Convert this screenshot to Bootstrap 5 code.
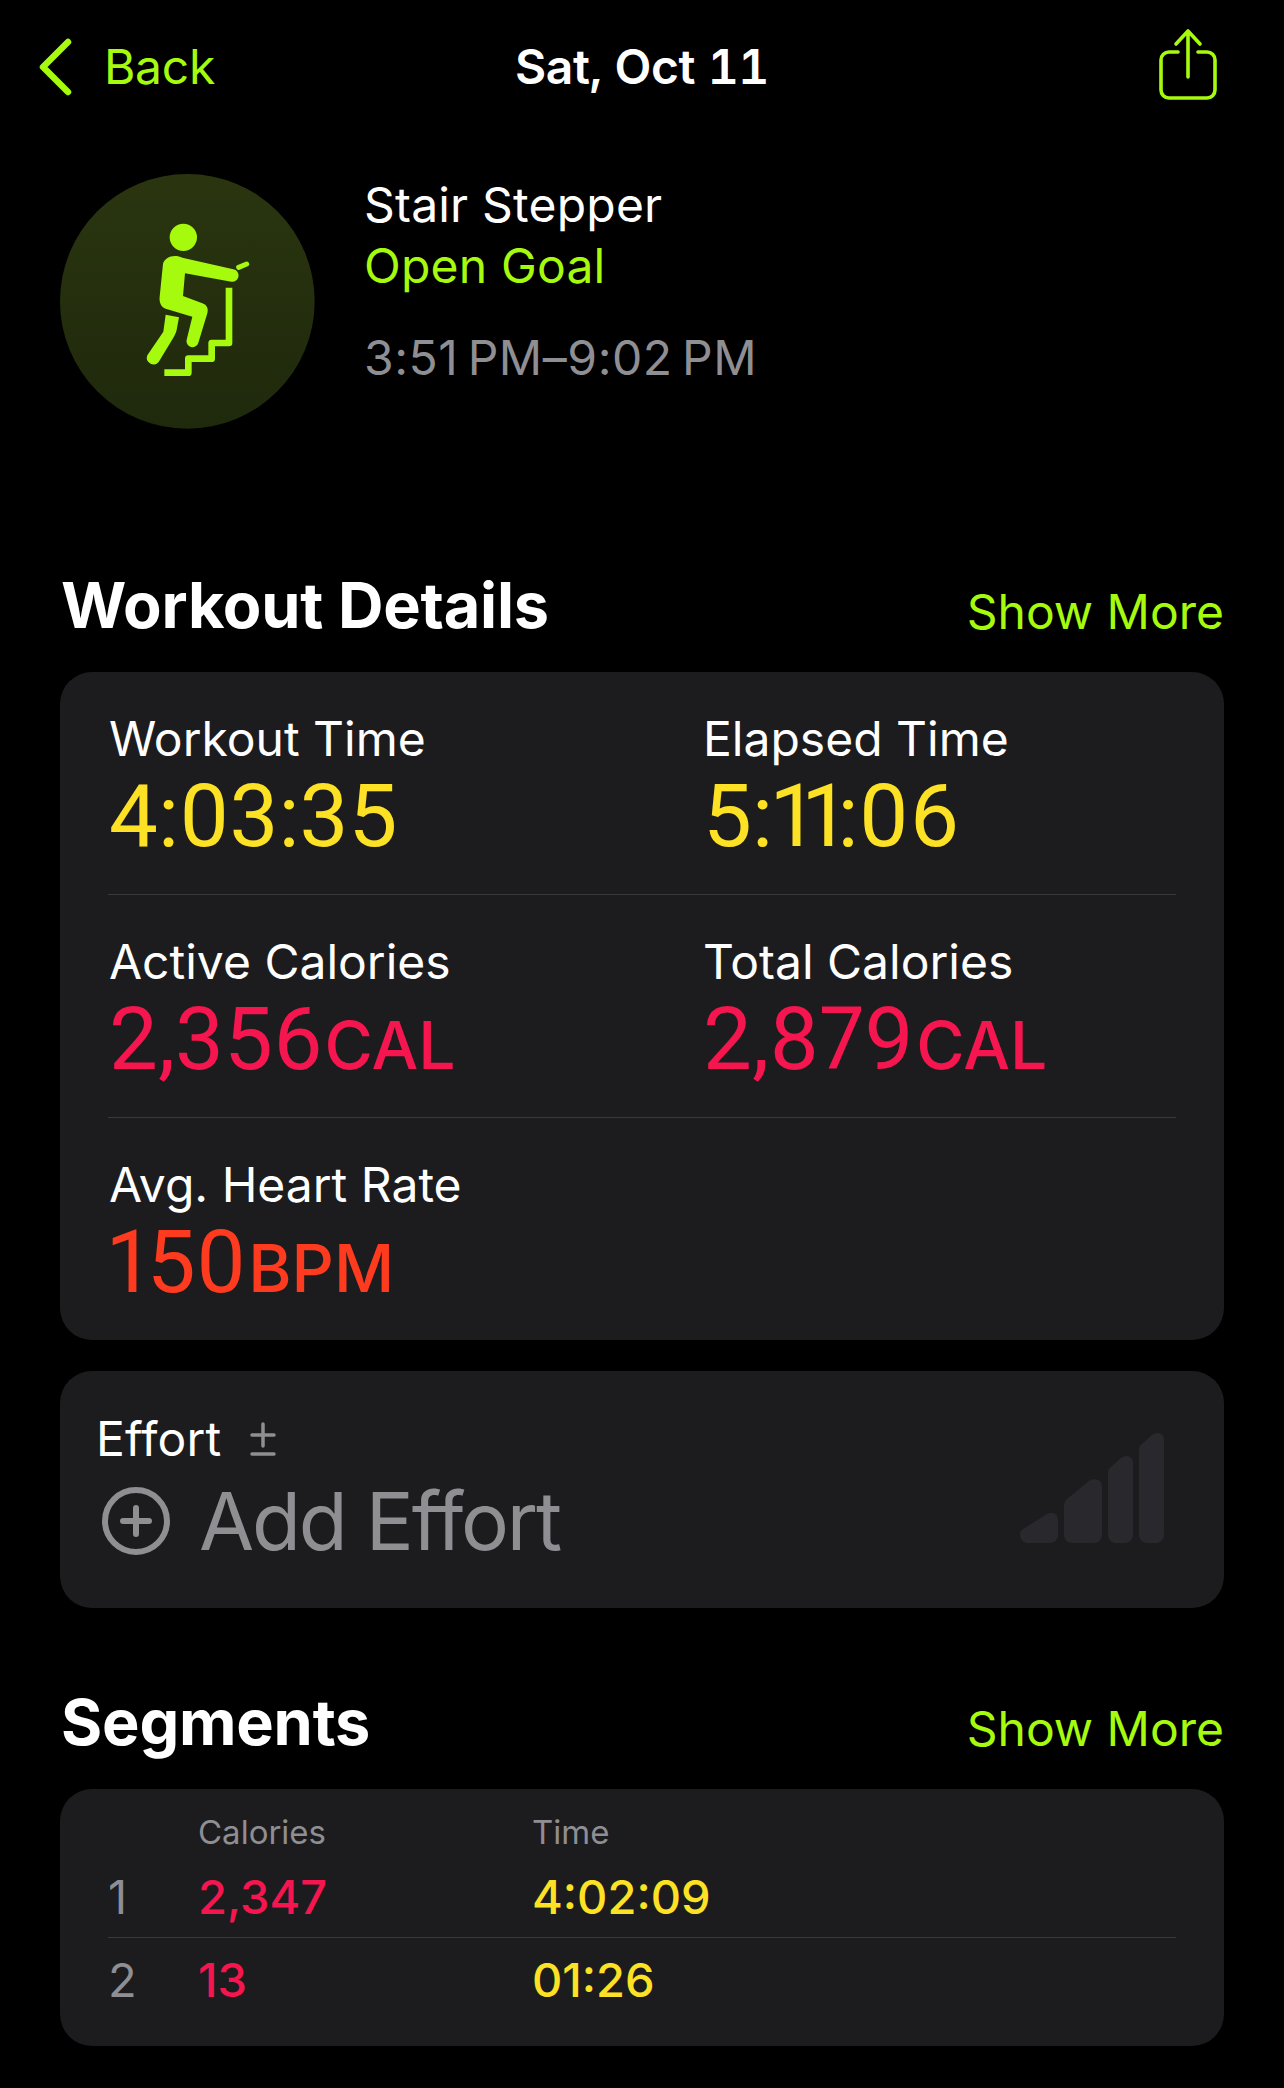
<!DOCTYPE html>
<html lang="en">
<head>
    <meta charset="UTF-8">
    <meta name="viewport" content="width=device-width, initial-scale=1.0">
    <title>Workout</title>
    <link rel="stylesheet" href="https://cdn.jsdelivr.net/npm/bootstrap@5.3.0/dist/css/bootstrap.min.css">
    <style>
        body {
            background-color: #000;
            color: #fff;
            font-family: Inter, "Liberation Sans", sans-serif;
            height: 2088px;
            overflow: hidden;
        }

        .screen {
            padding: 0 60px;
        }

        .top-bar {
            height: 134px;
            font-size: 48px;
            line-height: 1;
            letter-spacing: -0.3px;
        }

        .bar-side {
            flex: 1 1 0;
        }

        .back-link {
            margin-left: -23px;
            gap: 31px;
            color: #a6fa0e;
        }

        .day-title {
            font-weight: 600;
            letter-spacing: -0.4px;
            font-variant-numeric: tabular-nums;
        }

        .share-icon {
            margin-right: 5px;
            margin-top: -4px;
        }

        .summary {
            height: 440px;
            padding-top: 40px;
        }

        .workout-ring {
            width: 255px;
            height: 255px;
            flex: none;
        }

        .summary-text {
            margin-left: 49px;
            font-size: 48px;
            line-height: 61px;
            letter-spacing: 0.2px;
        }

        .goal-text {
            color: #a6fa0e;
        }

        .time-range {
            color: #8e8e93;
            margin-top: 31px;
            letter-spacing: 0.55px;
        }

        .section-head {
            height: 98px;
        }

        .section-title {
            font-size: 63px;
            font-weight: 700;
            line-height: 1;
            letter-spacing: -0.2px;
            margin: 0 0 0 1px;
        }

        .show-more {
            font-size: 48px;
            line-height: 1;
            margin-top: 14px;
            color: #a6fa0e;
        }

        .panel {
            background-color: #1c1c1e;
            border-radius: 32px;
        }

        .stat-panel {
            padding: 0 48px;
        }

        .stat-row {
            height: 223px;
            padding-top: 36px;
            border-bottom: 1px solid #38383a;
        }

        .stat-row:last-child {
            border-bottom: 0;
            height: 222px;
        }

        .stat-cell {
            width: 594px;
            flex: none;
        }

        .stat-label {
            font-size: 48px;
            line-height: 62px;
            margin-left: 1px;
        }

        .stat-value {
            font-family: Roboto, "Liberation Sans", sans-serif;
            font-size: 87px;
            line-height: 90px;
            font-variant-numeric: proportional-nums;
            margin: 1px 0 0 1px;
        }

        .tight-ones {
            letter-spacing: -6px;
            margin-right: 1px;
        }

        .stat-unit {
            font-family: Inter, "Liberation Sans", sans-serif;
            font-size: 66px;
            font-weight: 500;
            margin-left: 2px;
        }

        .c-yellow { color: #fde125; }
        .c-pink { color: #f5164f; }
        .c-red { color: #ff3b1f; }

        .effort-panel {
            margin-top: 31px;
            height: 237px;
            padding: 37px 60px 0 36px;
        }

        .effort-label {
            font-size: 48px;
            line-height: 62px;
            letter-spacing: 0.15px;
            gap: 29px;
        }

        .effort-row {
            margin-top: 6px;
        }

        .add-effort {
            font-size: 80px;
            line-height: 90px;
            color: #8e8e93;
            letter-spacing: -2.2px;
            gap: 28px;
        }

        .add-icon {
            margin-left: 5px;
        }

        .effort-bars {
            margin-top: -44px;
        }

        .segments-block {
            margin-top: 83px;
        }

        .seg-panel {
            height: 257px;
            padding-top: 21px;
        }

        .seg-grid {
            display: grid;
            grid-template-columns: 90px 334px 1fr;
            margin: 0 48px;
        }

        .seg-first {
            padding: 12px 0 9px;
            border-bottom: 1px solid #38383a;
        }

        .seg-second {
            padding-top: 11px;
        }

        .seg-data > * {
            font-size: 47px;
            line-height: 62px;
            font-weight: 500;
        }

        .seg-data > .seg-index {
            color: #8e8e93;
            font-weight: 400;
        }

        .seg-head > * {
            font-size: 33px;
            line-height: 44px;
            color: #8e8e93;
        }
    </style>
</head>
<body>
    <div class="screen">
        <!-- Top bar -->
        <div class="top-bar d-flex align-items-center">
            <div class="bar-side">
                <div class="back-link d-flex align-items-center">
                    <svg width="36" height="58" viewBox="0 0 36 58" fill="none" stroke="#a6fa0e" stroke-width="6.5" stroke-linecap="round" stroke-linejoin="round"><path d="M31 4 6 29l25 25"/></svg>
                    <span>Back</span>
                </div>
            </div>
            <div class="day-title">Sat, Oct 11</div>
            <div class="bar-side d-flex justify-content-end">
                <svg class="share-icon" width="62" height="78" viewBox="0 0 62 78" fill="none" stroke="#a6fa0e" stroke-width="3.6" stroke-linecap="round" stroke-linejoin="round"><path d="M21 26H12a8 8 0 0 0-8 8v30a8 8 0 0 0 8 8h38a8 8 0 0 0 8-8V34a8 8 0 0 0-8-8h-9"/><path d="M31 51V5M19 18 31 5l12 13"/></svg>
            </div>
        </div>

        <!-- Workout summary -->
        <div class="summary d-flex align-items-start">
            <svg class="workout-ring" viewBox="30 42 765 765">
                <defs>
                    <linearGradient id="ringFill" x1="0" y1="0" x2="0" y2="1">
                        <stop offset="0" stop-color="#2a3510"/>
                        <stop offset="1" stop-color="#1f290c"/>
                    </linearGradient>
                </defs>
                <circle cx="412" cy="424" r="382" fill="url(#ringFill)"/>
                <g fill="#a6fa0e">
                    <circle cx="400" cy="232" r="41"/>
                    <path d="M375 288c8 0 15 2 22 5l153 35a18 18 0 0 1-6 37l-139-25-6 68 58 22c14 5 19 16 15 30l-27 88a18 18 0 0 1-35-9l17-69-80-24c-14-5-20-20-18-36l10-98c3-14 18-24 36-24z"/>
                    <path d="M347 464l40 8-7 38c-2 8-5 15-10 23l-44 73a20 20 0 0 1-34-20l48-71z"/>
                </g>
                <path d="M566 322l24-10" stroke="#a6fa0e" stroke-width="15" stroke-linecap="round"/>
                <path d="M343 638h72v-42h70v-47h52V383" fill="none" stroke="#a6fa0e" stroke-width="20" stroke-linejoin="round"/>
            </svg>
            <div class="summary-text">
                <div>Stair Stepper</div>
                <div class="goal-text">Open Goal</div>
                <div class="time-range">3:51&#8201;PM–9:02&#8201;PM</div>
            </div>
        </div>

        <!-- Workout details -->
        <div class="section-head d-flex align-items-start justify-content-between">
            <h2 class="section-title">Workout Details</h2>
            <div class="show-more">Show More</div>
        </div>
        <div class="panel stat-panel">
            <div class="stat-row d-flex">
                <div class="stat-cell">
                    <div class="stat-label">Workout Time</div>
                    <div class="stat-value c-yellow">4:03:35</div>
                </div>
                <div class="stat-cell">
                    <div class="stat-label">Elapsed Time</div>
                    <div class="stat-value c-yellow">5:<span class="tight-ones">11</span>:06</div>
                </div>
            </div>
            <div class="stat-row d-flex">
                <div class="stat-cell">
                    <div class="stat-label">Active Calories</div>
                    <div class="stat-value c-pink">2,356<span class="stat-unit">CAL</span></div>
                </div>
                <div class="stat-cell">
                    <div class="stat-label">Total Calories</div>
                    <div class="stat-value c-pink">2,879<span class="stat-unit">CAL</span></div>
                </div>
            </div>
            <div class="stat-row d-flex">
                <div class="stat-cell">
                    <div class="stat-label">Avg. Heart Rate</div>
                    <div class="stat-value c-red">150<span class="stat-unit">BPM</span></div>
                </div>
            </div>
        </div>

        <!-- Effort -->
        <div class="panel effort-panel">
            <div class="effort-label d-flex align-items-center">
                <span>Effort</span>
                <svg width="26" height="36" viewBox="0 0 26 36" fill="none" stroke="#8e8e93" stroke-width="3.5" stroke-linecap="round"><path d="M2 14h22M13 3v22M2 33h22"/></svg>
            </div>
            <div class="effort-row d-flex align-items-start justify-content-between">
                <div class="add-effort d-flex align-items-center">
                    <svg class="add-icon" width="70" height="70" viewBox="0 0 70 70" fill="none" stroke="#8e8e93" stroke-width="6" stroke-linecap="round"><circle cx="35" cy="35" r="31"/><path d="M35 22v26M22 35h26"/></svg>
                    <span>Add Effort</span>
                </div>
                <svg class="effort-bars" width="144" height="111" viewBox="0 0 144 111" fill="#29292d"><path d="M0 103c0-3 1-5 3-6L27 82c5-3 11 0 11 6v15a8 8 0 0 1-8 8H8a8 8 0 0 1-8-8z"/><path d="M44 74c0-3 1-5 3-7L69 49c5-4 13-1 13 5v49a8 8 0 0 1-8 8H52a8 8 0 0 1-8-8z"/><path d="M88 41c0-3 1-5 3-6L101 26c5-4 12-2 12 5v72a8 8 0 0 1-8 8H96a8 8 0 0 1-8-8z"/><path d="M119 18c0-3 1-5 3-6L132 3c5-4 12-2 12 5v95a8 8 0 0 1-8 8h-9a8 8 0 0 1-8-8z"/></svg>
            </div>
        </div>

        <!-- Segments -->
        <div class="segments-block">
            <div class="section-head d-flex align-items-start justify-content-between">
                <h2 class="section-title">Segments</h2>
                <div class="show-more">Show More</div>
            </div>
            <div class="panel seg-panel">
                <div class="seg-grid seg-head">
                    <span></span><span>Calories</span><span>Time</span>
                </div>
                <div class="seg-grid seg-data seg-first">
                    <span class="seg-index">1</span><span class="c-pink">2,347</span><span class="c-yellow">4:02:09</span>
                </div>
                <div class="seg-grid seg-data seg-second">
                    <span class="seg-index">2</span><span class="c-pink">13</span><span class="c-yellow">01:26</span>
                </div>
            </div>
        </div>
    </div>
    <script src="https://cdn.jsdelivr.net/npm/bootstrap@5.3.0/dist/js/bootstrap.bundle.min.js"></script>
</body>
</html>
